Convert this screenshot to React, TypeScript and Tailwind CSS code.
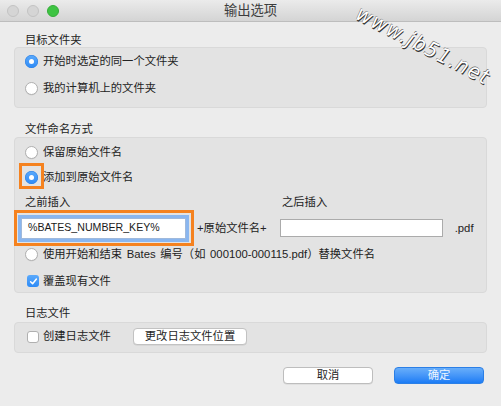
import React from "react";

const Radio = ({ checked }: { checked?: boolean }) =>
  checked ? (
    <span className="w-[13px] h-[13px] rounded-full bg-gradient-to-b from-[#5aa9fb] to-[#2d8bf6] flex items-center justify-center shrink-0 shadow-[inset_0_0_0_0.5px_#2a7de0]">
      <span className="w-[5px] h-[5px] rounded-full bg-white" />
    </span>
  ) : (
    <span className="w-[13px] h-[13px] rounded-full bg-white border border-[#b0b0b0] shrink-0 shadow-[0_0.5px_0.5px_rgba(0,0,0,0.08)]" />
  );

const Check = ({ checked }: { checked?: boolean }) =>
  checked ? (
    <span className="w-[12px] h-[12px] rounded-[3px] bg-gradient-to-b from-[#5aa9fb] to-[#2d8bf6] flex items-center justify-center shrink-0">
      <svg width="9" height="9" viewBox="0 0 9 9">
        <path d="M1.6 4.8 L3.6 6.8 L7.4 2" fill="none" stroke="white" strokeWidth="1.5" strokeLinecap="round" strokeLinejoin="round" />
      </svg>
    </span>
  ) : (
    <span className="w-[12px] h-[12px] rounded-[3px] bg-white border border-[#b0b0b0] shrink-0" />
  );

export default function App() {
  return (
    <div className="w-[501px] h-[406px] bg-[#ececec] relative overflow-hidden font-['Liberation_Sans','Noto_Sans_CJK_SC',sans-serif] text-[11.3px] text-[#222222]">
      {/* Title bar */}
      <div className="h-[22px] bg-gradient-to-b from-[#ebebeb] to-[#d4d4d4] border-b border-[#bdbdbd] flex items-center relative">
        <div className="flex gap-[8px] pl-[7px]">
          <span className="w-[12px] h-[12px] rounded-full bg-[#d5d5d5] border border-[#c3c3c3]" />
          <span className="w-[12px] h-[12px] rounded-full bg-[#d5d5d5] border border-[#c3c3c3]" />
          <span className="w-[12px] h-[12px] rounded-full bg-[#3ec443] border border-[#35ad39]" />
        </div>
        <div className="absolute inset-0 flex items-center justify-center text-[13.3px] text-[#3c3c3c] leading-none">输出选项</div>
      </div>

      <div className="px-[14px]">
        {/* Section 1 */}
        <div className="mt-[12px] ml-[11px] leading-[13px]">目标文件夹</div>
        <div className="bg-[#e3e3e3] border border-[#d9d9d9] rounded-[4px] pl-[10px] pt-[5px] pb-[11px]">
          <div className="flex items-center gap-[5px] h-[16px]">
            <Radio checked />
            <span>开始时选定的同一个文件夹</span>
          </div>
          <div className="flex items-center gap-[5px] h-[16px] mt-[11px]">
            <Radio />
            <span>我的计算机上的文件夹</span>
          </div>
        </div>

        {/* Section 2 */}
        <div className="mt-[15px] ml-[11px] leading-[13px]">文件命名方式</div>
        <div className="mt-[1px] bg-[#e3e3e3] border border-[#d9d9d9] rounded-[4px] pt-[6px] pb-[3px]">
          <div className="flex items-center gap-[5px] h-[16px] pl-[10px]">
            <Radio />
            <span>保留原始文件名</span>
          </div>
          <div className="flex items-center gap-[5px] h-[16px] mt-[9px] pl-[10px]">
            <span className="relative flex">
              <Radio checked />
              <span className="absolute left-[-6px] top-[-8px] right-[-6px] bottom-[-5px] border-[3px] border-[#f5821f]" />
            </span>
            <span>添加到原始文件名</span>
          </div>
          <div className="flex mt-[10px] leading-[14px]">
            <span className="ml-[10px] w-[257px]">之前插入</span>
            <span>之后插入</span>
          </div>
          <div className="flex items-center h-[22px] mt-[8px]">
            <div className="relative ml-[6px]">
              <div className="w-[165px] h-[21px] bg-white border border-[#9fb9dc] shadow-[0_0_0_3px_#8ab6ef] flex items-center pl-[6px] text-[10.6px] text-[#1a1a1a]">
                %BATES_NUMBER_KEY%
              </div>
              <span className="absolute left-[-7px] top-[-8px] right-[-8px] bottom-[-7px] border-[3px] border-[#f5821f]" />
            </div>
            <span className="ml-[11px]">+原始文件名+</span>
            <div className="ml-[13px] w-[163px] h-[18px] bg-white border border-[#ababab]" />
            <span className="ml-[12px]">.pdf</span>
          </div>
          <div className="flex items-center gap-[5px] h-[16px] mt-[7px] pl-[10px]">
            <Radio />
            <span className="[word-spacing:1.5px]">使用开始和结束 Bates 编号（如 000100-000115.pdf）替换文件名</span>
          </div>
          <div className="flex items-center gap-[4px] h-[16px] mt-[11px] pl-[12px]">
            <Check checked />
            <span>覆盖现有文件</span>
          </div>
        </div>

        {/* Section 3 */}
        <div className="mt-[14px] ml-[11px] leading-[13px]">日志文件</div>
        <div className="mt-[2px] bg-[#e3e3e3] border border-[#d9d9d9] rounded-[4px] pt-[4px] pb-[6px] pl-[12px]">
          <div className="flex items-center h-[19px]">
            <Check />
            <span className="ml-[4px] w-[68px]">创建日志文件</span>
            <button className="ml-[22px] w-[114px] h-[17px] bg-white border border-[#c2c2c2] rounded-[4px] shadow-[0_0.5px_0.5px_rgba(0,0,0,0.1)] text-[11.3px] leading-none flex items-center justify-center text-[#1f1f1f]">
              更改日志文件位置
            </button>
          </div>
        </div>

        {/* Footer */}
        <div className="flex justify-end gap-[21px] pr-[3px] mt-[14px]">
          <button className="w-[90px] h-[17px] bg-white border border-[#bdbdbd] rounded-[4px] shadow-[0_0.5px_0.5px_rgba(0,0,0,0.1)] text-[11.3px] leading-none flex items-center justify-center text-[#1f1f1f]">
            取消
          </button>
          <button className="w-[90px] h-[17px] bg-gradient-to-b from-[#68aefa] to-[#1a7cf5] border border-[#2b7fe6] rounded-[4px] text-[11.3px] leading-none flex items-center justify-center text-[#eef5ff]">
            确定
          </button>
        </div>
      </div>

      {/* Watermark */}
      <div className="absolute left-[423px] top-[46px] -translate-x-1/2 -translate-y-1/2 rotate-[27deg] text-[21px] italic font-['DejaVu_Sans_Condensed','Liberation_Sans',sans-serif] text-white tracking-[1.5px] leading-none whitespace-nowrap [text-shadow:1px_1px_0_#333,-0.5px_-0.5px_0_#666]">
        www.jb51.net
      </div>
    </div>
  );
}
